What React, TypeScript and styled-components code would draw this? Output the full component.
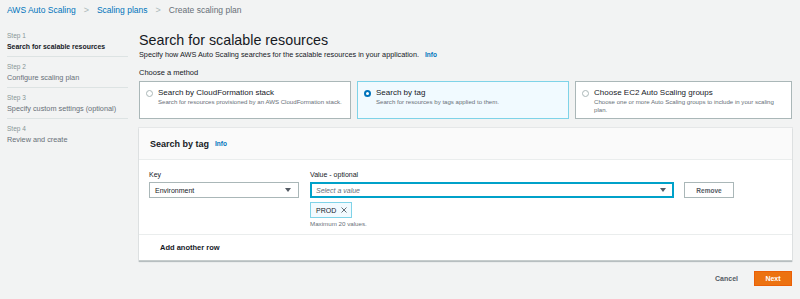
import React from "react";
import styled, { createGlobalStyle } from "styled-components";

const Global = createGlobalStyle`
  html, body { margin: 0; padding: 0; background: #f2f3f3; }
  body { font-family: "Liberation Sans", Arial, sans-serif; color: #16191f; }
  * { box-sizing: border-box; }
`;

const Page = styled.div`
  width: 800px;
  height: 299px;
  overflow: hidden;
  background: #f2f3f3;
`;

const Breadcrumbs = styled.nav`
  display: flex;
  align-items: center;
  height: 20px;
  padding-left: 7px;
  font-size: 8.5px;
  gap: 8px;
`;

const Crumb = styled.span<{ $current?: boolean }>`
  color: ${(p) => (p.$current ? "#687078" : "#0073bb")};
`;

const Chevron = styled.span`
  color: #aab7b8;
  font-size: 9px;
`;

const Body = styled.div`
  display: flex;
  padding: 10px 8px 0 7px;
`;

const Sidebar = styled.aside`
  width: 121px;
  flex: none;
  margin-right: 11px;
  padding-top: 1px;
`;

const Step = styled.div<{ $last?: boolean }>`
  padding: 0 0 4px;
  margin-bottom: 5px;
  border-bottom: ${(p) => (p.$last ? "none" : "1px solid #dde3e3")};
`;

const StepLabel = styled.div`
  font-size: 6.5px;
  color: #879596;
  line-height: 10px;
`;

const StepTitle = styled.div<{ $active?: boolean }>`
  font-size: ${(p) => (p.$active ? "6.9px" : "7.3px")};
  line-height: 11px;
  color: ${(p) => (p.$active ? "#16191f" : "#687078")};
  font-weight: ${(p) => (p.$active ? 700 : 400)};
`;

const Main = styled.main`
  flex: 1;
  display: flex;
  flex-direction: column;
`;

const Title = styled.h1`
  margin: 0;
  font-size: 14.3px;
  line-height: 20px;
  font-weight: 400;
`;

const Subtitle = styled.p`
  margin: 0;
  font-size: 7.3px;
  line-height: 10px;
  color: #16191f;
`;

const Info = styled.span`
  color: #0073bb;
  font-weight: 700;
  font-size: 6.5px;
  margin-left: 6px;
`;

const SectionLabel = styled.div`
  margin-top: 8px;
  font-size: 7.5px;
  line-height: 10px;
`;

const Cards = styled.div`
  display: grid;
  grid-template-columns: 212px 212px 1fr;
  gap: 5px 6px;
  margin-top: 3px;
`;

const Card = styled.div<{ $selected?: boolean }>`
  height: 38px;
  display: flex;
  gap: 5px;
  padding: 6px 6px 0 6px;
  background: ${(p) => (p.$selected ? "#f1faff" : "#ffffff")};
  border: 1px solid ${(p) => (p.$selected ? "#7fd3e8" : "#aab7b8")};
`;

const Radio = styled.span<{ $on?: boolean }>`
  flex: none;
  width: 7px;
  height: 7px;
  margin-top: 2px;
  border-radius: 50%;
  border: ${(p) => (p.$on ? "2px solid #0073bb" : "1px solid #aab7b8")};
  background: #fff;
`;

const CardText = styled.div`
  display: flex;
  flex-direction: column;
`;

const CardTitle = styled.div`
  font-size: 8px;
  line-height: 10px;
`;

const CardDesc = styled.div`
  font-size: 6.1px;
  line-height: 7.5px;
  color: #687078;
`;

const Panel = styled.section`
  margin-top: 9px;
  background: #fff;
  border-bottom: 1px solid #c6cccc;
  box-shadow: 0 1px 1px rgba(0, 28, 36, 0.2), 0 0 0 1px rgba(0, 28, 36, 0.05);
`;

const PanelHeader = styled.header`
  height: 32px;
  display: flex;
  align-items: center;
  padding-left: 11px;
  background: #fafafa;
  border-bottom: 1px solid #eaeded;
`;

const PanelTitle = styled.h2`
  margin: 0;
  font-size: 9px;
  font-weight: 700;
`;

const PanelBody = styled.div`
  padding: 9px 10px 0 10px;
  border-bottom: 1px solid #eaeded;
  height: 75px;
`;

const FieldRow = styled.div`
  display: flex;
  align-items: flex-start;
`;

const Field = styled.div<{ $w: number }>`
  width: ${(p) => p.$w}px;
  display: flex;
  flex-direction: column;
`;

const Label = styled.div`
  font-size: 7px;
  line-height: 9px;
  margin-top: 1px;
  margin-bottom: 3px;
`;

const Select = styled.div<{ $focus?: boolean; $w?: number }>`
  height: 16px;
  width: ${(p) => (p.$w ? `${p.$w}px` : "auto")};
  display: flex;
  align-items: center;
  justify-content: space-between;
  padding: 0 7px 0 5px;
  font-size: 7px;
  background: #fff;
  border: 1px solid ${(p) => (p.$focus ? "#00a1c9" : "#aab7b8")};
  box-shadow: ${(p) => (p.$focus ? "inset 0 0 0 1px #00a1c9" : "none")};
`;

const Placeholder = styled.span`
  font-style: italic;
  color: #687078;
`;

const Caret = styled.span`
  width: 0;
  height: 0;
  border-left: 3px solid transparent;
  border-right: 3px solid transparent;
  border-top: 4px solid #545b64;
`;

const Button = styled.button`
  margin-left: 10px;
  margin-top: 13px;
  width: 50px;
  height: 16px;
  padding: 0;
  background: #fff;
  border: 1px solid #aab7b8;
  font-family: inherit;
  font-weight: 700;
  font-size: 6.5px;
  color: #545b64;
`;

const Token = styled.div`
  margin-top: 4px;
  align-self: flex-start;
  height: 16px;
  display: flex;
  align-items: center;
  gap: 5px;
  padding: 0 4px 0 5px;
  background: #f1faff;
  border: 1px solid #7fd3e8;
  font-size: 7px;
`;

const Hint = styled.div`
  margin-top: 2px;
  font-size: 6.2px;
  color: #687078;
`;

const AddRow = styled.div`
  height: 25px;
  display: flex;
  align-items: center;
  padding-left: 21px;
  font-size: 7.5px;
  font-weight: 700;
  color: #16191f;
`;

const Footer = styled.div`
  display: flex;
  justify-content: flex-end;
  align-items: center;
  gap: 16px;
  margin-top: 10px;
`;

const Cancel = styled.span`
  font-size: 7px;
  font-weight: 700;
  color: #545b64;
`;

const Primary = styled.button`
  width: 38px;
  height: 15px;
  padding: 0;
  border: 1px solid #eb5f07;
  background: #ec7211;
  color: #fff;
  font-family: inherit;
  font-size: 7px;
  font-weight: 700;
`;

const Cross = () => (
  <svg width="6" height="6" viewBox="0 0 6 6">
    <path d="M0.5 0.5 L5.5 5.5 M5.5 0.5 L0.5 5.5" stroke="#545b64" strokeWidth="0.9" />
  </svg>
);

export default function App() {
  return (
    <>
      <Global />
      <Page>
        <Breadcrumbs>
          <Crumb>AWS Auto Scaling</Crumb>
          <Chevron>&gt;</Chevron>
          <Crumb>Scaling plans</Crumb>
          <Chevron>&gt;</Chevron>
          <Crumb $current>Create scaling plan</Crumb>
        </Breadcrumbs>
        <Body>
          <Sidebar>
            <Step>
              <StepLabel>Step 1</StepLabel>
              <StepTitle $active>Search for scalable resources</StepTitle>
            </Step>
            <Step>
              <StepLabel>Step 2</StepLabel>
              <StepTitle>Configure scaling plan</StepTitle>
            </Step>
            <Step>
              <StepLabel>Step 3</StepLabel>
              <StepTitle>Specify custom settings (optional)</StepTitle>
            </Step>
            <Step $last>
              <StepLabel>Step 4</StepLabel>
              <StepTitle>Review and create</StepTitle>
            </Step>
          </Sidebar>
          <Main>
            <Title>Search for scalable resources</Title>
            <Subtitle>
              Specify how AWS Auto Scaling searches for the scalable resources in your application.
              <Info>Info</Info>
            </Subtitle>
            <SectionLabel>Choose a method</SectionLabel>
            <Cards>
              <Card>
                <Radio />
                <CardText>
                  <CardTitle>Search by CloudFormation stack</CardTitle>
                  <CardDesc>Search for resources provisioned by an AWS CloudFormation stack.</CardDesc>
                </CardText>
              </Card>
              <Card $selected>
                <Radio $on />
                <CardText>
                  <CardTitle>Search by tag</CardTitle>
                  <CardDesc>Search for resources by tags applied to them.</CardDesc>
                </CardText>
              </Card>
              <Card>
                <Radio />
                <CardText>
                  <CardTitle>Choose EC2 Auto Scaling groups</CardTitle>
                  <CardDesc>Choose one or more Auto Scaling groups to include in your scaling plan.</CardDesc>
                </CardText>
              </Card>
            </Cards>
            <Panel>
              <PanelHeader>
                <PanelTitle>Search by tag</PanelTitle>
                <Info>Info</Info>
              </PanelHeader>
              <PanelBody>
                <FieldRow>
                  <Field $w={161}>
                    <Label>Key</Label>
                    <Select $w={150}>
                      <span>Environment</span>
                      <Caret />
                    </Select>
                  </Field>
                  <Field $w={364}>
                    <Label>Value - optional</Label>
                    <Select $focus>
                      <Placeholder>Select a value</Placeholder>
                      <Caret />
                    </Select>
                    <Token>
                      PROD <Cross />
                    </Token>
                    <Hint>Maximum 20 values.</Hint>
                  </Field>
                  <Button>Remove</Button>
                </FieldRow>
              </PanelBody>
              <AddRow>Add another row</AddRow>
            </Panel>
            <Footer>
              <Cancel>Cancel</Cancel>
              <Primary>Next</Primary>
            </Footer>
          </Main>
        </Body>
      </Page>
    </>
  );
}
